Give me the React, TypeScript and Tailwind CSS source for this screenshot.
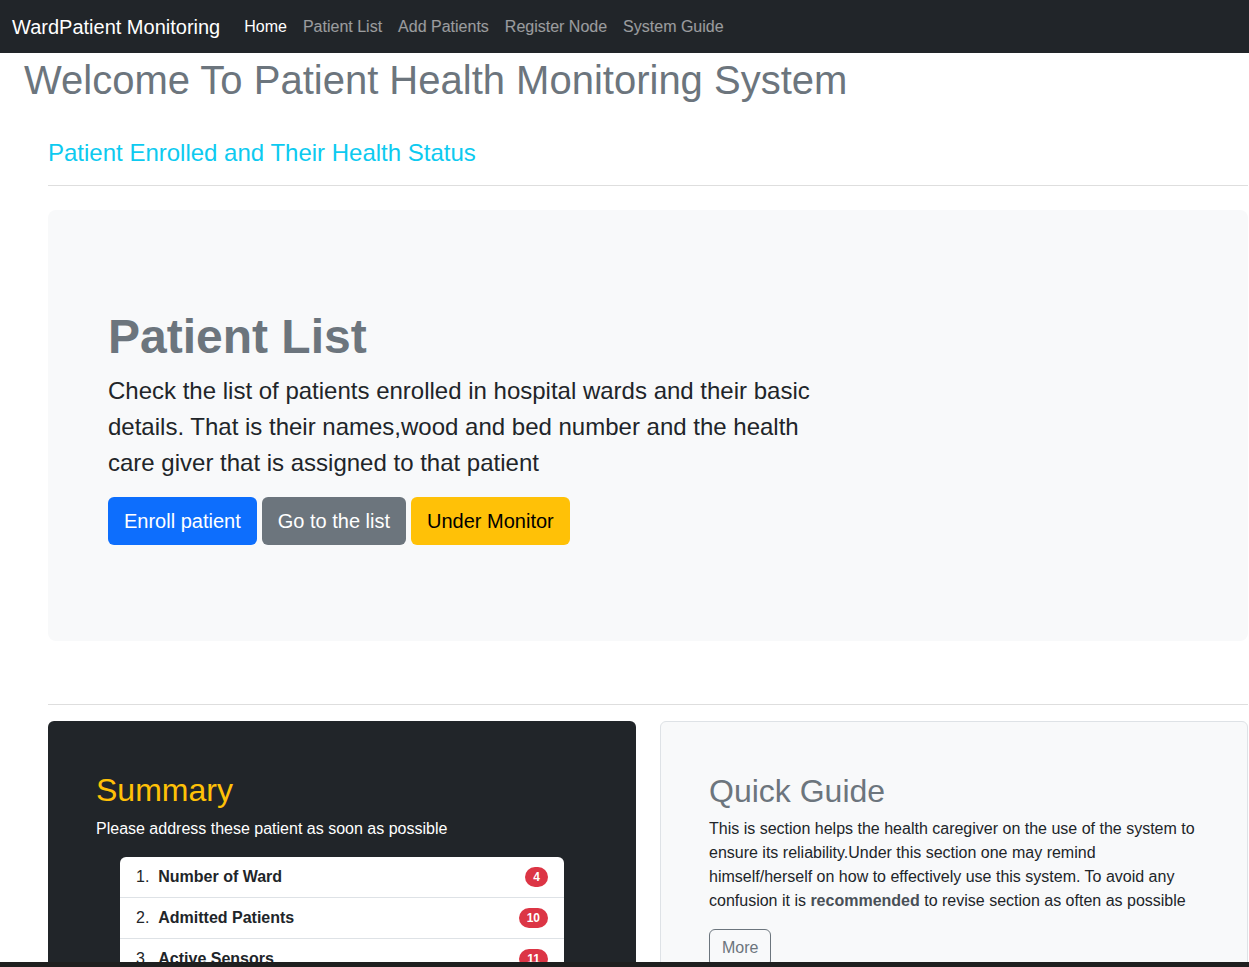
const navLinks = ['Home', 'Patient List', 'Add Patients', 'Register Node', 'System Guide']

const summary = [
  { label: 'Number of Ward', count: 4 },
  { label: 'Admitted Patients', count: 10 },
  { label: 'Active Sensors', count: 11 },
  { label: 'Critical Patients', count: 2 },
]

export default function App() {
  return (
    <div className="min-h-screen bg-white font-['Liberation_Sans',Arial,sans-serif] text-[#212529]">
      <nav className="h-[53px] bg-[#212529] flex items-center px-3">
        <span className="text-[20px] text-white mr-4">WardPatient Monitoring</span>
        <ul className="flex">
          {navLinks.map((l, i) => (
            <li key={l}>
              <a href="#" className={`block px-2 text-[16px] ${i === 0 ? 'text-white' : 'text-white/55'}`}>{l}</a>
            </li>
          ))}
        </ul>
      </nav>

      <h1 className="px-6 text-[40px] leading-[1.2] font-medium text-[#6c757d] mt-[3px]">
        Welcome To Patient Health Monitoring System
      </h1>

      <div className="ml-12 w-[1200px] pt-[35px]">
        <h4 className="text-[24px] leading-[1.2] text-[#0dcaf0]">Patient Enrolled and Their Health Status</h4>
        <hr className="mt-[17px] border-t border-[#dedede]" />

        <div className="mt-6 bg-[#f8f9fa] rounded-lg p-12">
          <div className="px-3 py-12">
            <h1 className="mt-[2px] text-[48px] leading-[1.2] font-bold text-[#6c757d] mb-2">Patient List</h1>
            <p className="w-[720px] text-[24px] leading-[1.5] mb-4">
              Check the list of patients enrolled in hospital wards and their basic details. That is their names,wood and bed number and the health care giver that is assigned to that patient
            </p>
            <div className="flex gap-[5px]">
              <button className="h-12 px-4 text-[20px] rounded-md bg-[#0d6efd] text-white">Enroll patient</button>
              <button className="h-12 px-4 text-[20px] rounded-md bg-[#6c757d] text-white">Go to the list</button>
              <button className="h-12 px-4 text-[20px] rounded-md bg-[#ffc107] text-black">Under Monitor</button>
            </div>
          </div>
        </div>

        <hr className="mt-[63px] border-t border-[#dedede]" />

        <div className="mt-4 grid grid-cols-2 gap-6">
          <div className="bg-[#212529] rounded-md p-12">
            <h2 className="mt-[2px] text-[32px] leading-[1.2] font-medium text-[#ffc107]">Summary</h2>
            <p className="mt-[7px] text-[16px] leading-6 text-white">Please address these patient as soon as possible</p>
            <ol className="mt-[16px] ml-6 w-[444px] bg-white rounded-md">
              {summary.map((s, i) => (
                <li key={s.label} className={`flex items-center justify-between px-4 py-2 ${i > 0 ? 'border-t border-[#dee2e6]' : ''}`}>
                  <span className="text-[16px] leading-6">
                    {i + 1}.&nbsp; <b className="font-bold">{s.label}</b>
                  </span>
                  <span className="bg-[#dc3545] text-white text-[12px] font-bold leading-none px-[8px] py-[4px] rounded-full">{s.count}</span>
                </li>
              ))}
            </ol>
          </div>

          <div className="bg-[#f8f9fa] border border-[#dee2e6] rounded-md p-12">
            <h2 className="mt-[2px] text-[32px] leading-[1.2] font-medium text-[#6c757d]">Quick Guide</h2>
            <p className="mt-[6px] text-[16px] leading-6">
              This is section helps the health caregiver on the use of the system to ensure its reliability.Under this section one may remind himself/herself on how to effectively use this system. To avoid any confusion it is <b className="font-bold text-[#495057]">recommended</b> to revise section as often as possible
            </p>
            <button className="mt-4 border border-[#6c757d] rounded-md px-3 py-[6px] text-[16px] text-[#6c757d]">More</button>
          </div>
        </div>
      </div>

      <div className="fixed bottom-0 left-0 right-0 h-[5px] bg-[#1f1f1f]" />
    </div>
  )
}
